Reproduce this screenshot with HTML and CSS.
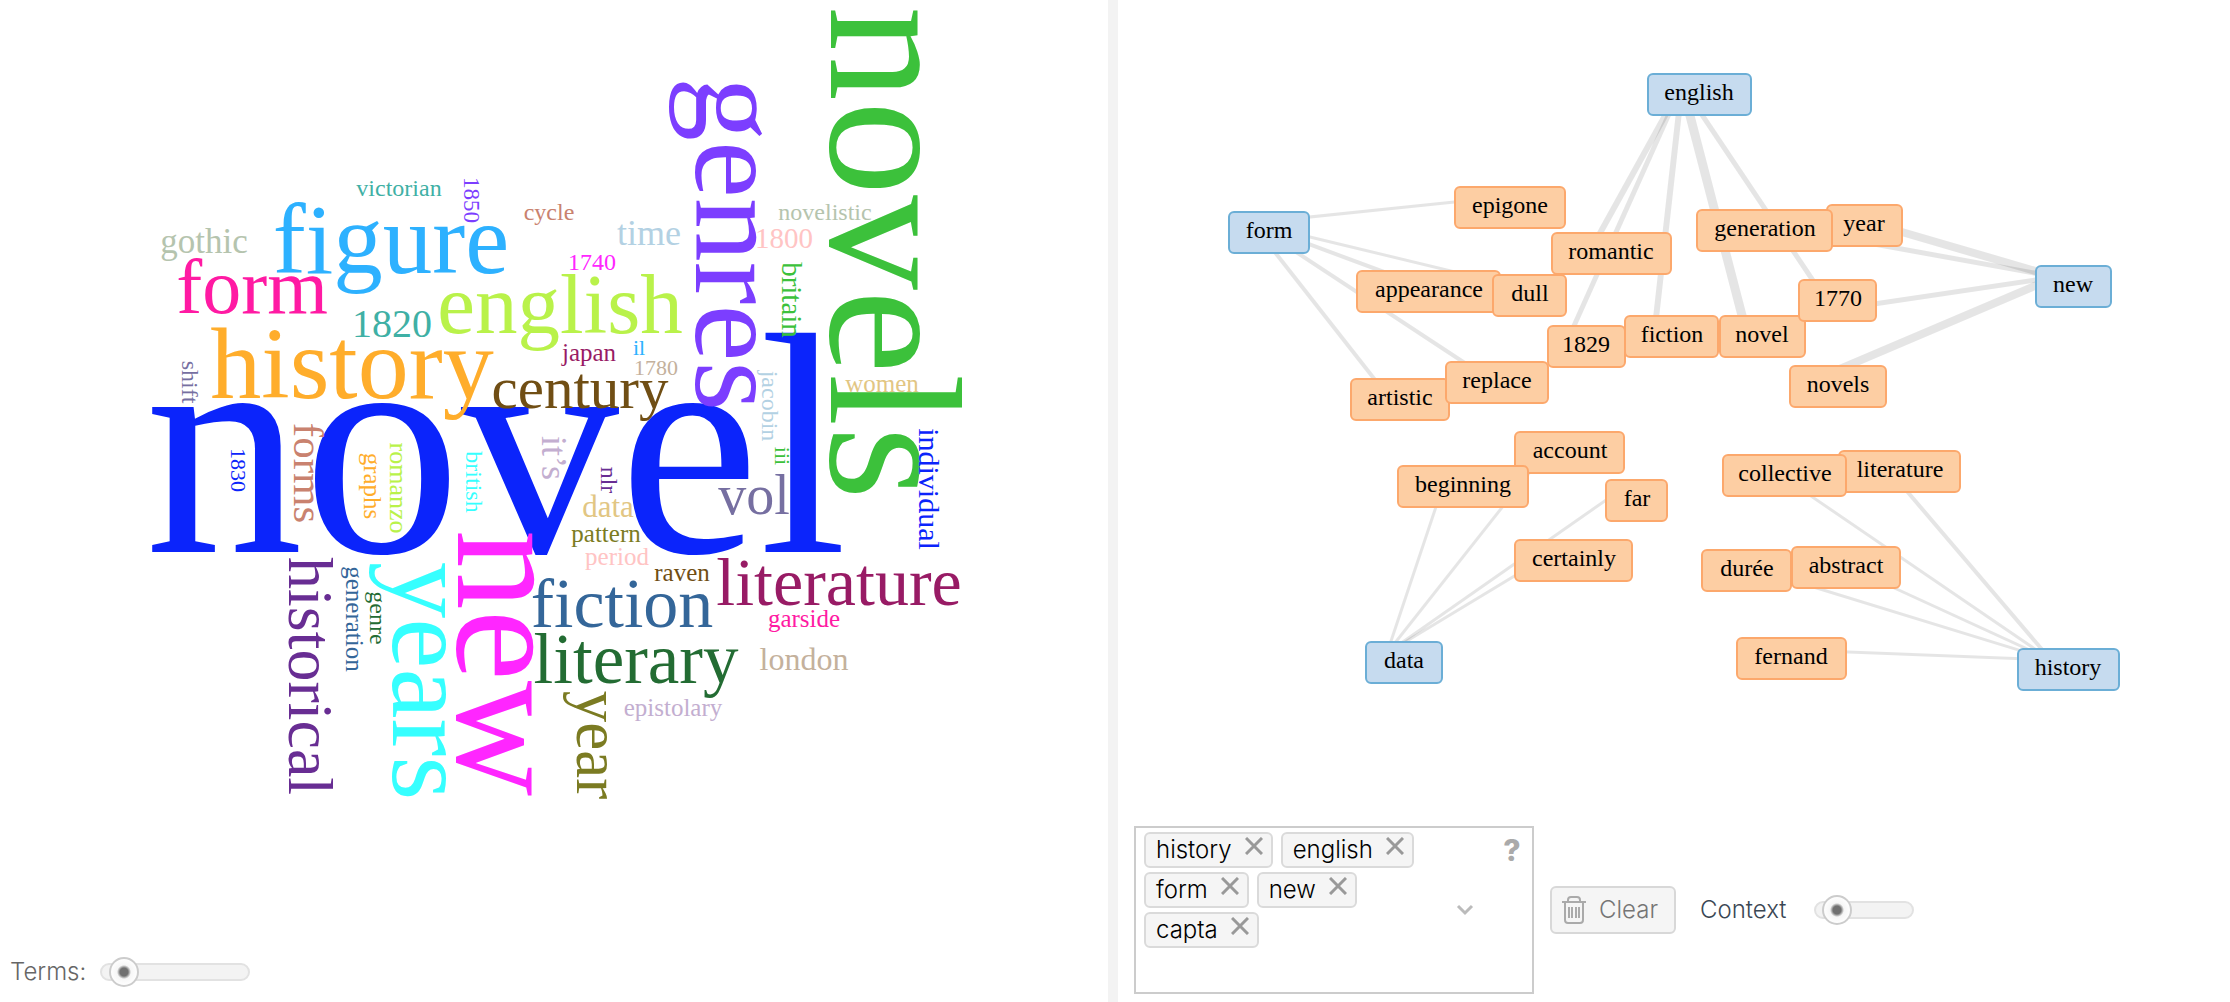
FILE: index.html
```html
<!DOCTYPE html>
<html lang="en">
<head>
<meta charset="utf-8">
<title>Corpus tools</title>
<link rel="stylesheet" href="styles.css">
</head>
<body>
<main class="workspace">
  <section class="pane pane-cirrus" aria-label="Word cloud">
    <svg class="canvas" viewBox="0 0 1108 940" role="img" aria-label="Word cloud of frequent terms">
      <g class="cloud">
        <text transform="translate(496 552)" font-size="316" fill="#0b24fb">novel</text>
        <text transform="translate(391 273)" font-size="99" fill="#2db1ff">figure</text>
        <text transform="translate(399 196)" font-size="24" fill="#3fb0a5">victorian</text>
        <text transform="translate(204 253)" font-size="35" fill="#b5c4ae">gothic</text>
        <text transform="translate(252 313)" font-size="78" fill="#ff1aa3">form</text>
        <text transform="translate(392 337)" font-size="40" fill="#3fb0a5">1820</text>
        <text transform="translate(560 333)" font-size="85" fill="#b9f24a">english</text>
        <text transform="translate(352 398)" font-size="102" fill="#ffad2b">history</text>
        <text transform="translate(580 408)" font-size="59" fill="#704e14">century</text>
        <text transform="translate(549 220)" font-size="24" fill="#c9826f">cycle</text>
        <text transform="translate(649 245)" font-size="36" fill="#b3d1e3">time</text>
        <text transform="translate(592 270)" font-size="24" fill="#ff26ff">1740</text>
        <text transform="translate(589 361)" font-size="25" fill="#981b65">japan</text>
        <text transform="translate(639 355)" font-size="22" fill="#2db1ff">il</text>
        <text transform="translate(656 375)" font-size="22" fill="#c4b19c">1780</text>
        <text transform="translate(825 220)" font-size="24" fill="#b5c4ae">novelistic</text>
        <text transform="translate(784 248)" font-size="29" fill="#ffc4c4">1800</text>
        <text transform="translate(754 514)" font-size="56" fill="#766fa1">vol</text>
        <text transform="translate(608 517)" font-size="31" fill="#e2c683">data</text>
        <text transform="translate(606 542)" font-size="25" fill="#7b7b22">pattern</text>
        <text transform="translate(617 565)" font-size="25" fill="#ffc4c4">period</text>
        <text transform="translate(682 581)" font-size="25" fill="#704e14">raven</text>
        <text transform="translate(839 605)" font-size="68" fill="#981b65">literature</text>
        <text transform="translate(622 627)" font-size="70" fill="#346699">fiction</text>
        <text transform="translate(636 683)" font-size="71" fill="#236c33">literary</text>
        <text transform="translate(804 627)" font-size="25" fill="#ff1aa3">garside</text>
        <text transform="translate(804 670)" font-size="32" fill="#c4b19c">london</text>
        <text transform="translate(673 716)" font-size="25" fill="#c3aed0">epistolary</text>
        <text transform="translate(831 253) rotate(90)" font-size="189" fill="#3cc13b">novels</text>
        <text transform="translate(882 392)" font-size="25" fill="#e2c683">women</text>
        <text transform="translate(696 244) rotate(90)" font-size="128" fill="#7c3eff">genres</text>
        <text transform="translate(464 200) rotate(90)" font-size="23" fill="#7c3eff">1850</text>
        <text transform="translate(782 300) rotate(90)" font-size="29" fill="#3cc13b">britain</text>
        <text transform="translate(762 406) rotate(90)" font-size="24" fill="#b3d1e3">jacobin</text>
        <text transform="translate(775 456) rotate(90)" font-size="22" fill="#3cc13b">iii</text>
        <text transform="translate(919 489) rotate(90)" font-size="30" fill="#0b24fb">individual</text>
        <text transform="translate(601 480) rotate(90)" font-size="24" fill="#682d93">nlr</text>
        <text transform="translate(542 458) rotate(90)" font-size="36" fill="#c3aed0">it’s</text>
        <text transform="translate(182 382) rotate(90)" font-size="24" fill="#766fa1">shift</text>
        <text transform="translate(294 473) rotate(90)" font-size="43" fill="#c9826f">forms</text>
        <text transform="translate(231 470) rotate(90)" font-size="22" fill="#0b24fb">1830</text>
        <text transform="translate(364 486) rotate(90)" font-size="25" fill="#ffad2b">graphs</text>
        <text transform="translate(390 488) rotate(90)" font-size="26" fill="#b9f24a">romanzo</text>
        <text transform="translate(466 482) rotate(90)" font-size="24" fill="#36ffff">british</text>
        <text transform="translate(289 676) rotate(90)" font-size="64" fill="#682d93">historical</text>
        <text transform="translate(346 619) rotate(90)" font-size="25" fill="#346699">generation</text>
        <text transform="translate(370 618) rotate(90)" font-size="24" fill="#236c33">genre</text>
        <text transform="translate(393 681) rotate(90)" font-size="113" fill="#36ffff">years</text>
        <text transform="translate(458 663) rotate(90)" font-size="160" fill="#ff26ff">new</text>
        <text transform="translate(577 745) rotate(90)" font-size="63" fill="#7b7b22">year</text>
      </g>
    </svg>
    <footer class="bar bar-terms">
      <label for="terms">Terms:</label>
      <input class="slider slider-wide" id="terms" type="range" min="0" max="100" value="6">
    </footer>
  </section>

  <div class="splitter" role="separator"></div>

  <section class="pane pane-links" aria-label="Collocate graph">
    <svg class="canvas" viewBox="1118 0 1112 816" role="img" aria-label="Graph of terms and their collocates">
      <g class="edges">
        <path class="w3" d="M1252 223L1493 198"/>
        <path class="w4" d="M1252 223L1411 282"/>
        <path class="w3" d="M1252 223L1513 286"/>
        <path class="w4" d="M1252 223L1480 373"/>
        <path class="w4" d="M1252 223L1383 390"/>
        <path class="w6" d="M1682 85L1594 244"/>
        <path class="w5" d="M1682 85L1569 337"/>
        <path class="w6" d="M1682 85L1655 327"/>
        <path class="w9" d="M1682 85L1745 327"/>
        <path class="w5" d="M1682 85L1820 291"/>
        <path class="w8" d="M2056 277L1847 216"/>
        <path class="w5" d="M2056 277L1747 221"/>
        <path class="w5" d="M2056 277L1820 312"/>
        <path class="w8" d="M2056 277L1821 377"/>
        <path class="w3" d="M1387 653L1553 443"/>
        <path class="w3" d="M1387 653L1446 477"/>
        <path class="w3" d="M1387 653L1619 491"/>
        <path class="w3" d="M1387 653L1556 551"/>
        <path class="w3" d="M2051 660L1767 466"/>
        <path class="w4" d="M2051 660L1882 462"/>
        <path class="w3" d="M2051 660L1729 561"/>
        <path class="w3" d="M2051 660L1829 558"/>
        <path class="w3" d="M2051 660L1774 649"/>
      </g>
      <g class="node"><rect x="1455" y="187" width="110" height="41" rx="5"/><text x="1510" y="213">epigone</text></g>
      <g class="node"><rect x="1357" y="271" width="143" height="41" rx="5"/><text x="1429" y="297">appearance</text></g>
      <g class="node"><rect x="1493" y="275" width="73" height="41" rx="5"/><text x="1530" y="301">dull</text></g>
      <g class="node"><rect x="1552" y="233" width="119" height="41" rx="5"/><text x="1611" y="259">romantic</text></g>
      <g class="node"><rect x="1548" y="326" width="77" height="41" rx="5"/><text x="1586" y="352">1829</text></g>
      <g class="node"><rect x="1351" y="379" width="98" height="41" rx="5"/><text x="1400" y="405">artistic</text></g>
      <g class="node"><rect x="1446" y="362" width="102" height="41" rx="5"/><text x="1497" y="388">replace</text></g>
      <g class="node"><rect x="1720" y="316" width="85" height="41" rx="5"/><text x="1762" y="342">novel</text></g>
      <g class="node"><rect x="1625" y="316" width="93" height="41" rx="5"/><text x="1672" y="342">fiction</text></g>
      <g class="node"><rect x="1827" y="205" width="75" height="41" rx="5"/><text x="1864" y="231">year</text></g>
      <g class="node"><rect x="1697" y="210" width="135" height="41" rx="5"/><text x="1765" y="236">generation</text></g>
      <g class="node"><rect x="1799" y="280" width="77" height="41" rx="5"/><text x="1838" y="306">1770</text></g>
      <g class="node"><rect x="1790" y="366" width="96" height="41" rx="5"/><text x="1838" y="392">novels</text></g>
      <g class="node"><rect x="1515" y="432" width="109" height="41" rx="5"/><text x="1570" y="458">account</text></g>
      <g class="node"><rect x="1398" y="466" width="130" height="41" rx="5"/><text x="1463" y="492">beginning</text></g>
      <g class="node"><rect x="1606" y="480" width="61" height="41" rx="5"/><text x="1637" y="506">far</text></g>
      <g class="node"><rect x="1515" y="540" width="117" height="41" rx="5"/><text x="1574" y="566">certainly</text></g>
      <g class="node"><rect x="1839" y="451" width="121" height="41" rx="5"/><text x="1900" y="477">literature</text></g>
      <g class="node"><rect x="1723" y="455" width="123" height="41" rx="5"/><text x="1785" y="481">collective</text></g>
      <g class="node"><rect x="1702" y="550" width="89" height="41" rx="5"/><text x="1747" y="576">durée</text></g>
      <g class="node"><rect x="1792" y="547" width="108" height="41" rx="5"/><text x="1846" y="573">abstract</text></g>
      <g class="node"><rect x="1737" y="638" width="109" height="41" rx="5"/><text x="1791" y="664">fernand</text></g>
      <g class="node keyword"><rect x="1229" y="212" width="80" height="41" rx="5"/><text x="1269" y="238">form</text></g>
      <g class="node keyword"><rect x="1648" y="74" width="103" height="41" rx="5"/><text x="1699" y="100">english</text></g>
      <g class="node keyword"><rect x="2036" y="266" width="75" height="41" rx="5"/><text x="2073" y="292">new</text></g>
      <g class="node keyword"><rect x="1366" y="642" width="76" height="41" rx="5"/><text x="1404" y="668">data</text></g>
      <g class="node keyword"><rect x="2018" y="649" width="101" height="41" rx="5"/><text x="2068" y="675">history</text></g>
    </svg>
    <footer class="bar bar-links">
      <div class="tagbox">
        <ul class="tags">
          <li class="tag">history<button class="remove" type="button" aria-label="Remove history"><svg viewBox="0 0 18 18"><path d="M1 1L17 17M17 1L1 17"/></svg></button></li>
          <li class="tag">english<button class="remove" type="button" aria-label="Remove english"><svg viewBox="0 0 18 18"><path d="M1 1L17 17M17 1L1 17"/></svg></button></li>
          <li class="tag">form<button class="remove" type="button" aria-label="Remove form"><svg viewBox="0 0 18 18"><path d="M1 1L17 17M17 1L1 17"/></svg></button></li>
          <li class="tag">new<button class="remove" type="button" aria-label="Remove new"><svg viewBox="0 0 18 18"><path d="M1 1L17 17M17 1L1 17"/></svg></button></li>
          <li class="tag">capta<button class="remove" type="button" aria-label="Remove capta"><svg viewBox="0 0 18 18"><path d="M1 1L17 17M17 1L1 17"/></svg></button></li>
          <li class="entry"><input type="text" aria-label="Add a term"></li>
        </ul>
        <button class="open" type="button" aria-label="Show terms"><svg viewBox="0 0 18 12"><path d="M2 2L9 9L16 2"/></svg></button>
        <button class="help" type="button" aria-label="Help">?</button>
      </div>
      <button class="clear" type="button">
        <svg viewBox="0 0 26 28"><path d="M1 6H25M7 6V4Q7 1 10 1H16Q19 1 19 4V6M4 7V24Q4 27 7 27H19Q22 27 22 24V7"/><path class="thin" d="M8 11V22M11 11V22M15 11V22M18 11V22"/></svg>
        Clear
      </button>
      <label class="context" for="context">Context</label>
      <input class="slider" id="context" type="range" min="0" max="100" value="8">
    </footer>
  </section>
</main>
</body>
</html>
```
FILE: styles.css
```css
* { box-sizing: border-box; }

body {
  margin: 0;
  background: #fff;
  color: #666;
  font: 300 24px/32px Inter, "Liberation Sans", sans-serif;
}

button, input { font: inherit; }

.workspace {
  display: grid;
  grid-template-columns: minmax(0, 1108fr) 10px minmax(0, 1112fr);
  min-height: 100vh;
}

.splitter { background: #f3f3f3; }

.pane {
  display: flex;
  flex-direction: column;
  min-width: 0;
}

.canvas {
  display: block;
  width: 100%;
  flex: 1;
  min-height: 0;
}

.bar {
  display: flex;
  align-items: center;
}

.bar-terms {
  gap: 14px;
  padding: 16px 10px 14px;
}

.bar-links { padding: 10px 16px 8px; }

/* word cloud */
.cloud text {
  font-family: Palatino, "Palatino Linotype", "Liberation Serif", serif;
  font-weight: 400;
  text-anchor: middle;
}

/* collocate graph */
.edges path {
  fill: none;
  stroke: #000;
  stroke-opacity: 0.1;
}
.w3 { stroke-width: 3; }
.w4 { stroke-width: 4; }
.w5 { stroke-width: 5; }
.w6 { stroke-width: 6; }
.w8 { stroke-width: 8; }
.w9 { stroke-width: 9; }

.node rect {
  fill: #fdcea3;
  stroke: #fca86c;
  stroke-width: 2;
}
.node text {
  fill: #000;
  font-family: Palatino, "Palatino Linotype", "Liberation Serif", serif;
  font-size: 24px;
  font-weight: 400;
  text-anchor: middle;
}
.keyword rect {
  fill: #c6dbef;
  stroke: #6baed6;
}

/* term picker */
.tagbox {
  display: flex;
  width: 400px;
  height: 168px;
  padding: 4px 8px;
  border: 2px solid #ccc;
}

.tags {
  display: flex;
  flex: 1;
  flex-wrap: wrap;
  align-content: flex-start;
  gap: 4px 8px;
  margin: 0;
  padding: 0;
  list-style: none;
}

.tag {
  display: flex;
  height: 36px;
  gap: 13px;
  padding: 0 8px 0 10px;
  border: 2px solid #dadada;
  border-radius: 6px;
  background: #f5f5f5;
  color: #000;
}

.entry { flex: 1; min-width: 0; }
.entry input {
  width: 100%;
  height: 36px;
  border: 0;
  outline: 0;
  background: none;
}

.remove, .open, .help {
  padding: 0;
  border: 0;
  background: none;
}
.remove {
  width: 18px;
  height: 18px;
  margin-top: 3px;
}
.remove svg, .open svg { display: block; }
.remove path {
  fill: none;
  stroke: #999;
  stroke-width: 3;
}

.open {
  width: 18px;
  margin-right: 26px;
}
.open path {
  fill: none;
  stroke: #bbb;
  stroke-width: 3;
}

.help {
  align-self: flex-start;
  width: 24px;
  color: #aaa;
  font-size: 30px;
  font-weight: 800;
  line-height: 36px;
}

.clear {
  display: flex;
  align-items: center;
  gap: 12px;
  height: 48px;
  margin-left: 16px;
  padding: 0 16px 0 9px;
  border: 2px solid #d8d8d8;
  border-radius: 6px;
  background: #f5f5f5;
  color: #757575;
}
.clear svg {
  width: 26px;
  height: 28px;
}
.clear path {
  fill: none;
  stroke: #aaa;
  stroke-width: 2;
}

.context {
  margin: 0 28px 0 24px;
  color: #3b4754;
}

/* sliders */
.slider {
  width: 100px;
  height: 30px;
  margin: 0;
  background: none;
  -webkit-appearance: none;
  appearance: none;
}
.slider-wide { width: 150px; }

.slider::-webkit-slider-runnable-track {
  height: 18px;
  border: 2px solid #e2e2e2;
  border-radius: 9px;
  background: #f3f3f3;
}
.slider::-webkit-slider-thumb {
  width: 30px;
  height: 30px;
  margin-top: -8px;
  border: 2px solid #ccc;
  border-radius: 50%;
  background: radial-gradient(circle, #707070 0 4px, #f6f6f6 7px, #fff 14px);
  -webkit-appearance: none;
  appearance: none;
}
```
